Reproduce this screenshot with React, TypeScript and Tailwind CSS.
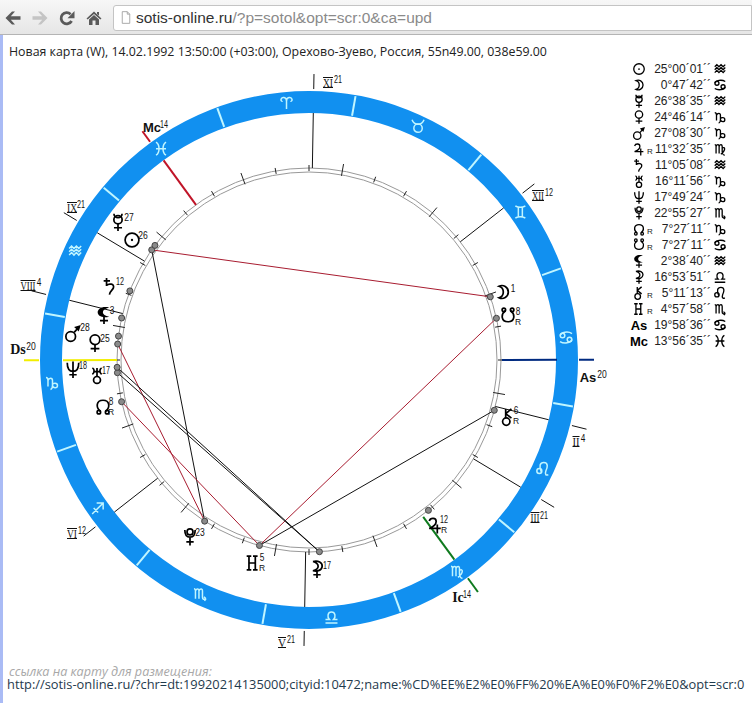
import React from "react";

type G = { d: string; c?: number[][]; f?: string };
const G_: Record<string, G> = {
  sun: { d: "", c: [[8, 8, 6]], f: "M7 8a1 1 0 1 0 2 0a1 1 0 1 0-2 0Z" },
  moon: { d: "M4.5 3 A5.6 5.6 0 1 1 4.5 13 A5.2 5.2 0 0 0 4.5 3Z" },
  mercury: { d: "M4.5 0.8 A3.5 3.5 0 0 0 11.5 0.8 M8 9.5 V15.8 M4.5 13 H11.5", c: [[8, 6, 3.6]] },
  venus: { d: "M8 9.5 V15.8 M4.2 12.8 H11.8", c: [[8, 5.2, 4.2]] },
  mars: { d: "M9 7.5 L13 3", c: [[6, 11, 4.2]], f: "M14.8 1 L9 2.8 L13 6.8Z" },
  jupiter: { d: "M3 4.5 C4 1.5 9 1.5 9 5 C9 8 5.5 10 3 11 H13 M10 7.5 V15.5" },
  saturn: { d: "M5 1 V8 M2.5 3.5 H8 M5 7.5 C7 5.5 12 6 11 9.5 C10.5 11.5 8 12 7.5 15.5" },
  uranus: { d: "M4 2 C6 3 6 6 4 7.5 M12 2 C10 3 10 6 12 7.5 M4.8 5 H11.2 M8 2 V9.5", c: [[8, 12.3, 3]] },
  neptune: { d: "M3 2.5 C3 8 5 10 8 10 C11 10 13 8 13 2.5 M8 1.5 V15.8 M4.8 13 H11.2" },
  pluto: { d: "M3.5 2 C3.5 6.5 5.5 8.2 8 8.2 C10.5 8.2 12.5 6.5 12.5 2 M8 8 V15.5 M4.8 12.2 H11.2", c: [[8, 3.6, 2.6]] },
  node: { d: "M5.8 12.5 C1.5 9.5 2 3 8 3 C14 3 14.5 9.5 10.2 12.5", c: [[4.4, 13.4, 1.5], [11.6, 13.4, 1.5]] },
  snode: { d: "M5.8 3.5 C1.5 6.5 2 13 8 13 C14 13 14.5 6.5 10.2 3.5", c: [[4.4, 2.6, 1.5], [11.6, 2.6, 1.5]] },
  lilith: { d: "M8 9.5 V15.8 M4.5 12.8 H11.5", f: "M12.5 1.5 C6 0 2.5 3 2.5 5.7 C2.5 8.5 6 11 12.5 9.5 C9 9 7 7.6 7 5.7 C7 3.8 9 2.4 12.5 1.5Z" },
  selena: { d: "M4.5 1.5 C9 0.2 12.8 2.5 12.5 5.7 C12.2 9 8.5 10.5 4.5 9.5 C7.5 8.8 9 7.3 9 5.6 C9 3.8 7.5 2.4 4.5 1.5 M8 10 V15.8 M4.8 13 H11.2" },
  chiron: { d: "M6 1 V9 M6 5 L11 1 M6 5 L11 9", c: [[6.5, 12, 3.2]] },
  hades: { d: "M4.5 2 V14 M10 2 V14 M4.5 8 H10 M2.5 2 H6.5 M2.5 14 H6.5 M8 2 H12 M8 14 H12" },
  aries: { d: "M8 14 V6 C8 2 3 1.5 2.5 4.5 C2.3 6 3.5 6.5 4 6 M8 6 C8 2 13 1.5 13.5 4.5 C13.7 6 12.5 6.5 12 6" },
  taurus: { d: "M2 1.5 C3.5 5.5 5.5 6 8 6 C10.5 6 12.5 5.5 14 1.5", c: [[8, 10, 4.2]] },
  gemini: { d: "M3 2 C6 3.5 10 3.5 13 2 M3 14 C6 12.5 10 12.5 13 14 M6 3 V13 M10 3 V13" },
  cancer: { d: "M2.2 6 C3 2.5 10 1.5 14 4 M13.8 10 C13 13.5 6 14.5 2 12", c: [[4.5, 6, 2.3], [11.5, 10, 2.3]] },
  leo: { d: "M6.5 11 C4 5 5 1.5 9 1.5 C14 1.5 12.5 7 11 10 C10 13 11 15 13.5 13.5", c: [[4.5, 10, 2.5]] },
  virgo: { d: "M2 3 C3.5 3 3.5 4 3.5 5 V13 M3.5 5 C5 2 7 3 7 5 V13 M7 5 C8.5 2 10.5 3 10.5 5 V11 C10.5 13 12 15 13.5 15 M10.5 7 C14 5 15 9 9 14" },
  libra: { d: "M2 14 H14 M2 10.5 H6 C3.5 8 4 3 8 3 C12 3 12.5 8 10 10.5 H14" },
  scorpio: { d: "M2 3 C3.5 3 3.5 4 3.5 5 V13 M3.5 5 C5 2 7 3 7 5 V13 M7 5 C8.5 2 10.5 3 10.5 5 V11.5 C10.5 13.5 12 14 14 13 M14 13 L12 11 M14 13 L12.5 15" },
  sag: { d: "M2.5 14 L13.5 3 M7 3 H13.5 V9.5 M4 8 L8.5 12.5" },
  cap: { d: "M2 3 C3.5 3 4 4.5 4 6 V12 M4 6 C5 3 8.5 3 8.5 6 V11 C8.5 13 8 14.5 6.5 15 M8.5 10 C9 8.5 13.5 8 13.5 11 C13.5 14 9 14 8.5 11" },
  aquarius: { d: "M2 5.5 L4.4 3 L6.8 5.5 L9.2 3 L11.6 5.5 L14 3 M2 8.8 L4.4 6.3 L6.8 8.8 L9.2 6.3 L11.6 8.8 L14 6.3 M2 12.1 L4.4 9.6 L6.8 12.1 L9.2 9.6 L11.6 12.1 L14 9.6" },
  pisces: { d: "M3 1.5 C7 4 7 12 3 14.5 M13 1.5 C9 4 9 12 13 14.5 M3 8 H13" },
};

function Shape({ n, color = "#000", sw = 1.6 }: { n: string; color?: string; sw?: number }) {
  const g = G_[n];
  return (
    <>
      {g.d && <path d={g.d} fill="none" stroke={color} strokeWidth={sw} />}
      {g.c?.map((c, i) => <circle key={i} cx={c[0]} cy={c[1]} r={c[2]} fill="none" stroke={color} strokeWidth={sw} />)}
      {g.f && <path d={g.f} fill={color} stroke="none" />}
    </>
  );
}

const CX = 309;
const CY = 360;
const pt = (lon: number, r: number) => {
  const a = ((lon - 110) * Math.PI) / 180;
  return [CX + r * Math.cos(a), CY + r * Math.sin(a)];
};
const P: Record<string, number> = {
  sun: 325, moon: 90.79, mercury: 326.64, venus: 294.77, mars: 297.14, jupiter: 161.54, saturn: 311.09,
  uranus: 286.2, neptune: 287.82, pluto: 232.92, node: 277.45, snode: 97.45, lilith: 302.64, selena: 196.89,
  chiron: 125.19, hades: 214.96,
};
const SIGNS = ["aries", "taurus", "gemini", "cancer", "leo", "virgo", "libra", "scorpio", "sag", "cap", "aquarius", "pisces"];

function Seg({ lon, r1, r2, color, w }: { lon: number; r1: number; r2: number; color: string; w: number }) {
  const a = pt(lon, r1);
  const b = pt(lon, r2);
  return <line x1={a[0]} y1={a[1]} x2={b[0]} y2={b[1]} stroke={color} strokeWidth={w} />;
}
function Asp({ a, b, color }: { a: string; b: string; color: string }) {
  const p = pt(P[a], 192);
  const q = pt(P[b], 192);
  return <line x1={p[0]} y1={p[1]} x2={q[0]} y2={q[1]} stroke={color} strokeWidth={1} />;
}

const sans = "'Liberation Sans', Arial, sans-serif";
const serif = "'Liberation Serif', serif";

function Sup({ x, y, t }: { x: number; y: number; t: string }) {
  const w = t.length === 1 ? 4.6 : t.includes("1") ? 8 : 9.5;
  return (
    <text x={x} y={y + 4} fontFamily={sans} fontSize={10} textAnchor="middle" textLength={w} lengthAdjust="spacingAndGlyphs" fill="#111">
      {t}
    </text>
  );
}

const glyphs: [string, number, number, string, number, number, boolean?][] = [
  ["sun", 132, 240, "26", 143, 235],
  ["mercury", 118, 222, "27", 129, 217],
  ["saturn", 110, 286, "12", 120, 281],
  ["lilith", 104, 315, "3", 112, 310],
  ["mars", 73, 333, "28", 85, 327],
  ["venus", 95, 343, "25", 105, 338],
  ["neptune", 73, 369, "18", 83, 365],
  ["uranus", 97, 375, "17", 106, 370],
  ["node", 103, 406, "8", 111, 401, true],
  ["pluto", 190, 537, "23", 200, 532],
  ["hades", 253, 563, "5", 262, 557, true],
  ["selena", 317, 569, "17", 327, 565],
  ["jupiter", 435, 525, "12", 444, 519, true],
  ["chiron", 508, 417, "6", 516, 410, true],
  ["snode", 508, 316, "8", 518, 311, true],
  ["moon", 503, 292, "1", 513, 288],
];

const romans: [string, number, number, number, string, number, number][] = [
  ["XI", 328, 82, 10, "21", 338, 79],
  ["XII", 538, 195, 12, "12", 549, 192],
  ["II", 576, 441, 7, "4", 583, 438],
  ["III", 535, 517, 9, "21", 544, 515],
  ["V", 282, 642, 8, "21", 291, 639],
  ["VI", 72, 533, 10, "12", 82, 530],
  ["VIII", 28, 285, 15, "4", 39, 282],
  ["IX", 72, 207, 10, "21", 81, 204],
];
const angles: [string, number, number, string, number, number, string, number][] = [
  ["Mc", 152, 127, "14", 164, 124, sans, 13],
  ["As", 588, 377, "20", 602, 374, sans, 13],
  ["Ic", 458, 597, "14", 467, 594, serif, 14],
  ["Ds", 18, 349, "20", 31, 346, serif, 14],
];

function Chart() {
  const ticks = [];
  for (let l = 0; l < 360; l += 10) {
    const long = l % 30 === 0;
    ticks.push(<Seg key={l} lon={l} r1={long ? 187 : 189} r2={long ? 199 : 195} color="#222" w={1} />);
  }
  return (
    <svg viewBox="3 60 624 605" className="block w-[624px] h-[605px] shrink-0">
      <circle cx={CX} cy={CY} r={258} fill="none" stroke="#1190f0" strokeWidth={22} />
      {SIGNS.map((s, i) => {
        const [x, y] = pt(i * 30 + 15, 258);
        return (
          <g key={s} transform={`translate(${x - 8} ${y - 8})`}>
            <Shape n={s} color="#c0f5ff" sw={1.5} />
          </g>
        );
      })}
      {SIGNS.map((s, i) => <Seg key={s} lon={i * 30} r1={248} r2={268} color="#c0f5ff" w={2} />)}

      <circle cx={CX} cy={CY} r={192} fill="none" stroke="#999" strokeWidth={1} />
      <circle cx={CX} cy={CY} r={188} fill="none" stroke="#999" strokeWidth={1} />
      {ticks}

      {[21, 72, 124, 141, 201, 252, 304, 321].map((l) => (
        <g key={l}>
          <Seg lon={l} r1={192} r2={247} color="#111" w={1} />
          <Seg lon={l} r1={271} r2={286} color="#111" w={1} />
        </g>
      ))}
      <Seg lon={109.97} r1={193} r2={248} color="#002a80" w={2} />
      <Seg lon={109.97} r1={270} r2={285} color="#002a80" w={2} />
      <Seg lon={289.97} r1={192} r2={246} color="#f2ee00" w={2} />
      <Seg lon={289.97} r1={270} r2={285} color="#f2ee00" w={2} />
      <Seg lon={343.94} r1={192} r2={247} color="#c01428" w={2} />
      <Seg lon={343.94} r1={270} r2={283} color="#c01428" w={2} />
      <Seg lon={163.94} r1={194} r2={247} color="#0f7a1e" w={2} />
      <Seg lon={163.94} r1={270} r2={287} color="#0f7a1e" w={2} />

      <Asp a="sun" b="moon" color="#a81c30" />
      <Asp a="sun" b="pluto" color="#111" />
      <Asp a="venus" b="pluto" color="#a81c30" />
      <Asp a="node" b="hades" color="#a81c30" />
      <Asp a="snode" b="hades" color="#a81c30" />
      <Asp a="hades" b="chiron" color="#111" />
      <Asp a="neptune" b="selena" color="#111" />
      <Asp a="uranus" b="selena" color="#111" />

      {Object.keys(P).map((k) => {
        const [x, y] = pt(P[k], 192);
        return <circle key={k} cx={x} cy={y} r={3} fill="#8a8a8a" stroke="#444" strokeWidth={1} />;
      })}

      {glyphs.map(([n, x, y, deg, sx, sy, r]) => (
        <g key={n}>
          <g transform={`translate(${x - 9.2} ${y - 9.2}) scale(1.15)`}>
            <Shape n={n} sw={1.5} />
          </g>
          <Sup x={sx} y={sy} t={deg} />
          {r && <text x={sx} y={sy + 14} fontFamily={sans} fontSize={8.5} textAnchor="middle" fill="#111">R</text>}
        </g>
      ))}

      {romans.map(([t, x, y, w, deg, sx, sy]) => (
        <g key={t}>
          <text x={x} y={y + 5} fontFamily={serif} fontSize={13} textAnchor="middle" textLength={w} lengthAdjust="spacingAndGlyphs" fill="#111">{t}</text>
          <line x1={x - w / 2} x2={x + w / 2} y1={y - 4.5} y2={y - 4.5} stroke="#111" />
          <line x1={x - w / 2} x2={x + w / 2} y1={y + 5.5} y2={y + 5.5} stroke="#111" />
          <Sup x={sx} y={sy} t={deg} />
        </g>
      ))}
      {angles.map(([t, x, y, deg, sx, sy, ff, fs]) => (
        <g key={t}>
          <text x={x} y={y + 5} fontFamily={ff} fontSize={fs} fontWeight={700} textAnchor="middle" fill="#111">{t}</text>
          <Sup x={sx} y={sy} t={deg} />
        </g>
      ))}
    </svg>
  );
}

const rows: [string, boolean, string, string][] = [
  ["sun", false, "25°00´01´´", "aquarius"],
  ["moon", false, "0°47´42´´", "cancer"],
  ["mercury", false, "26°38´35´´", "aquarius"],
  ["venus", false, "24°46´14´´", "cap"],
  ["mars", false, "27°08´30´´", "cap"],
  ["jupiter", true, "11°32´35´´", "virgo"],
  ["saturn", false, "11°05´08´´", "aquarius"],
  ["uranus", false, "16°11´56´´", "cap"],
  ["neptune", false, "17°49´24´´", "cap"],
  ["pluto", false, "22°55´27´´", "scorpio"],
  ["node", true, "7°27´11´´", "cap"],
  ["snode", true, "7°27´11´´", "cancer"],
  ["lilith", false, "2°38´40´´", "aquarius"],
  ["selena", false, "16°53´51´´", "libra"],
  ["chiron", true, "5°11´13´´", "leo"],
  ["hades", true, "4°57´58´´", "scorpio"],
  ["As", false, "19°58´36´´", "cancer"],
  ["Mc", false, "13°56´35´´", "pisces"],
];

function Icon({ n, cls }: { n: string; cls: string }) {
  return (
    <svg viewBox="0 0 16 16" className={cls}>
      <Shape n={n} sw={1.5} />
    </svg>
  );
}

function Table() {
  return (
    <div className="flex flex-col ml-[6px] mt-[1px] font-['Liberation_Sans',sans-serif]">
      {rows.map(([p, r, deg, s], i) => (
        <div key={i} className="flex items-center h-4 text-[#222]">
          <div className="w-[12px] flex justify-center">
            {G_[p] ? (
              <Icon n={p} cls="w-[14px] h-[14px] shrink-0" />
            ) : (
              <span className="text-[13px] font-bold leading-none text-black">{p}</span>
            )}
          </div>
          <span className="w-[8px] text-[8px] leading-none pt-[5px] pl-[2px]">{r ? "R" : ""}</span>
          <span className="w-[58px] text-right text-[12px] leading-none whitespace-nowrap">{deg}</span>
          <Icon n={s} cls="ml-[2px] w-[14px] h-[14px] shrink-0" />
        </div>
      ))}
    </div>
  );
}

function Toolbar() {
  return (
    <div className="h-[35px] pt-[1px] flex items-center bg-gradient-to-b from-[#f7f7f7] to-[#e6e6e6] border-b border-[#b4b4b4] overflow-hidden">
      <svg viewBox="0 0 16 16" className="ml-[5px] w-[16px] h-[16px] text-[#5a5a5a]">
        <path d="M0.5 8 L7 1.5 H10 L5.8 6.3 H15.5 V9.7 H5.8 L10 14.5 H7Z" fill="currentColor" />
      </svg>
      <svg viewBox="0 0 16 16" className="ml-[11px] w-[16px] h-[16px] text-[#c4c4c4]">
        <path d="M15.5 8 L9 1.5 H6 L10.2 6.3 H0.5 V9.7 H10.2 L6 14.5 H9Z" fill="currentColor" />
      </svg>
      <svg viewBox="0 0 16 16" className="ml-[11px] w-[16px] h-[16px] text-[#5a5a5a]">
        <path d="M12.6 11 A5.6 5.6 0 1 1 11.6 4.2" fill="none" stroke="currentColor" strokeWidth={2.8} />
        <path d="M15.5 1 V8.2 H8.5Z" fill="currentColor" />
      </svg>
      <svg viewBox="0 0 16 16" className="ml-[11px] w-[16px] h-[16px] text-[#5a5a5a]">
        <path d="M8 1.5 L15.5 8.5 L14.3 9.6 L8 3.9 L1.7 9.6 L0.5 8.5Z M11 2 H13 V5.5 L11 4Z M3 9.5 L8 5 L13 9.5 V15 H9.5 V10.5 H6.5 V15 H3Z" fill="currentColor" />
      </svg>
      <div className="ml-[11px] flex-1 h-[26px] flex items-center bg-white border border-[#c4c4c4] rounded-l-[3px] pl-[7px]">
        <svg viewBox="0 0 12 16" className="w-[10px] h-[15px] text-[#9a9a9a]">
          <path d="M1.5 1 H7.5 L10.5 4 V15 H1.5Z M7.5 1 V4 H10.5" fill="none" stroke="currentColor" strokeWidth={1} />
        </svg>
        <span className="ml-[5px] text-[15.5px] leading-none text-[#333] font-['Liberation_Sans',sans-serif] whitespace-nowrap">
          sotis-online.ru<span className="text-[#8a8a8a]">/?p=sotol&amp;opt=scr:0&amp;ca=upd</span>
        </span>
      </div>
    </div>
  );
}

export default function App() {
  return (
    <div className="w-[752px] h-[703px] flex flex-col bg-white overflow-hidden">
      <Toolbar />
      <div className="flex flex-1 min-h-0">
        <div className="w-[3px] bg-[#aabbf5] shrink-0" />
        <div className="flex-1 min-w-0 flex flex-col">
          <div className="h-[25px] flex items-end pl-[6px] text-[12.37px] leading-[16px] text-[#222] font-['Open_Sans',sans-serif] whitespace-nowrap">
            Новая карта (W), 14.02.1992 13:50:00 (+03:00), Орехово-Зуево, Россия, 55n49.00, 038e59.00
          </div>
          <div className="flex">
            <Chart />
            <Table />
          </div>
          <div className="pl-[6px] text-[12.6px] leading-[13px] italic text-[#a8a8a8] font-['Open_Sans',sans-serif] whitespace-nowrap">
            ссылка на карту для размещения:
          </div>
          <div className="pl-[4px] text-[12.85px] leading-[13px] text-[#1f3a4d] font-['Open_Sans',sans-serif] whitespace-nowrap">
            http://sotis-online.ru/?chr=dt:19920214135000;cityid:10472;name:%CD%EE%E2%E0%FF%20%EA%E0%F0%F2%E0&amp;opt=scr:0
          </div>
        </div>
      </div>
    </div>
  );
}
